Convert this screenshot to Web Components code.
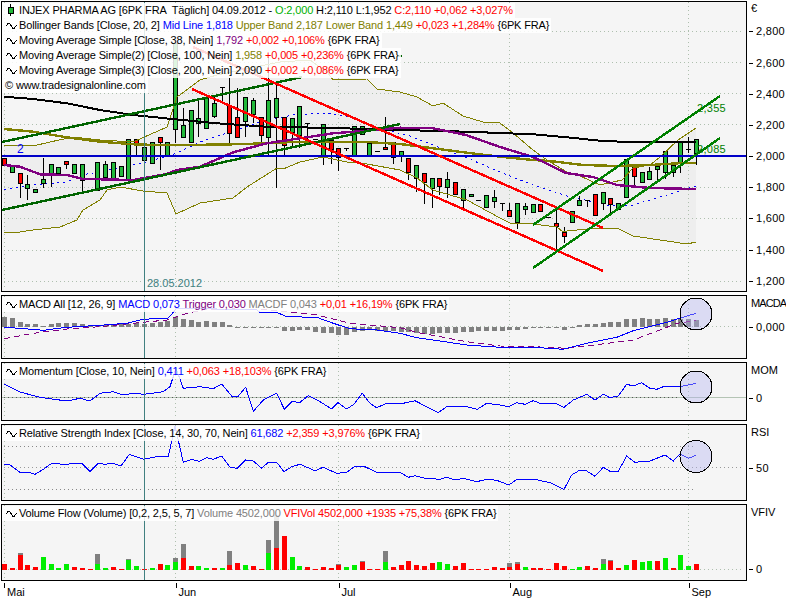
<!DOCTYPE html>
<html lang="de"><head><meta charset="utf-8"><title>INJEX PHARMA AG</title>
<style>
html,body{margin:0;background:#fff}
body{font:11px "Liberation Sans",Arial,sans-serif;color:#000}
.b{color:#0000ff}.o{color:#808000}.r{color:#ff0000}.g{color:#00b000}.p{color:#800080}.y{color:#808080}
</style></head><body>
<ts-chart>
<ts-pane kind="price" height="291" title-y="8" title="€" ticks="31:2,800 62.5:2,600 93.5:2,400 124.5:2,200 156:2,000 187:1,800 218:1,600 250:1,400 281:1,200">
<ts-legend>
<ts-row icon="candle">INJEX PHARMA AG [6PK FRA  Täglich] 04.09.2012 - <span class="g">O:2,000</span> H:2,110 L:1,952 <span class="r">C:2,110 +0,062 +3,027%</span></ts-row>
<ts-row icon="wave">Bollinger Bands [Close, 20, 2] <span class="b">Mid Line 1,818</span> <span class="o">Upper Band 2,187 Lower Band 1,449</span> <span class="r">+0,023 +1,284%</span> {6PK FRA}</ts-row>
<ts-row icon="wave">Moving Average Simple [Close, 38, Nein] <span class="p">1,792</span> <span class="r">+0,002 +0,106%</span> {6PK FRA}</ts-row>
<ts-row icon="wave">Moving Average Simple(2) [Close, 100, Nein] <span class="o">1,958</span> <span class="r">+0,005 +0,236%</span> {6PK FRA}</ts-row>
<ts-row icon="wave">Moving Average Simple(3) [Close, 200, Nein] 2,090 <span class="r">+0,002 +0,086%</span> {6PK FRA}</ts-row>
<ts-row icon="copy">© www.tradesignalonline.com</ts-row>
</ts-legend>
</ts-pane>
<ts-pane kind="macd" height="64" title-y="302.7" title="MACDA" title-tight ticks="326.7:0,000">
<ts-legend><ts-row icon="wave">MACD All [12, 26, 9] <span class="b">MACD 0,073</span> <span class="p">Trigger 0,030</span> <span class="y">MACDF 0,043</span> <span class="r">+0,01 +16,19%</span> {6PK FRA}</ts-row></ts-legend>
</ts-pane>
<ts-pane kind="mom" height="59" title-y="370" title="MOM" ticks="397.7:0">
<ts-legend><ts-row icon="wave">Momentum [Close, 10, Nein] <span class="b">0,411</span> <span class="r">+0,063 +18,103%</span> {6PK FRA}</ts-row></ts-legend>
</ts-pane>
<ts-pane kind="rsi" height="77" title-y="432" title="RSI" ticks="467.7:50">
<ts-legend><ts-row icon="wave">Relative Strength Index [Close, 14, 30, 70, Nein] <span class="b">61,682</span> <span class="r">+2,359 +3,976%</span> {6PK FRA}</ts-row></ts-legend>
</ts-pane>
<ts-pane kind="vol" height="77" title-y="512" title="VFIV" ticks="569.3:0">
<ts-legend><ts-row icon="wave">Volume Flow (Volume) [0,2, 2,5, 5, 7] <span class="y">Volume 4502,000</span> <span class="r">VFIVol 4502,000 +1935 +75,38%</span> {6PK FRA}</ts-row></ts-legend>
</ts-pane>
<ts-timeaxis>
<ts-month width="171.5">Mai</ts-month><ts-month width="163">Jun</ts-month><ts-month width="171">Jul</ts-month><ts-month width="179">Aug</ts-month><ts-month width="60">Sep</ts-month>
</ts-timeaxis>
</ts-chart>
<script>
const X=i=>Math.round(4+7.775*i);
const zl=(ox,oy,a)=>{const o=[];for(let k=0;k<a.length;k+=2)o.push([ox+a[k]/3,oy+a[k+1]/3]);return o};
const pts=p=>p.map(q=>q[0].toFixed(1)+','+q[1].toFixed(1)).join(' ');
const pl=(p,c,w,x='')=>`<polyline points="${pts(p)}" fill="none" stroke="${c}" stroke-width="${w}" ${x}/>`;
const ln=(a,b,c,d,col,w,x='')=>`<line x1="${a}" y1="${b}" x2="${c}" y2="${d}" stroke="${col}" stroke-width="${w}" ${x}/>`;
const MONTHS=[4.5,175.5,338.5,509.5,688.5];
const DOT='stroke-dasharray="1 3"';
const GC='#aebfae';
function vgrid(y0,y1){return MONTHS.map(x=>ln(x,y0,x,y1,GC,1,DOT)).join('')}
function hgrid(ys,col=GC,x1=744){return ys.map(y=>ln(4,y,x1,y,col,1,DOT)).join('')}
const teal=(y0,y1)=>ln(144.5,y0,144.5,y1,'#408080',1);
const circle=cy=>`<circle cx="696" cy="${cy}" r="16" fill="#b4b4f0" fill-opacity=".4" stroke="#000" stroke-width="1"/>`;

const C=[[0,158,165,0,'r'],[0,165,172,0,'g'],[0,173,183,198,'r'],[175,184,188,200,'g'],[0,189,192,0,'g'],[158,179,183,188,'g'],[0,164,173,187,'g'],[0,167,173,0,'g'],[0,161,164,169,'r'],[0,164,173,0,'g'],[0,164,180,191,'g'],[0,179,179,0,'g'],[0,162,190,0,'g'],[161,164,177,0,'g'],[0,162,179,0,'g'],[0,166,176,0,'g'],[0,139,180,0,'g'],[0,139,144,155,'r'],[0,147,160,0,'g'],[0,142,163,0,'g'],[0,137,142,170,'r'],[0,142,155,0,'g'],[0,43,129,143,'g'],[108,125,137,0,'g'],[0,110,142,0,'g'],[99,118,123,137,'g'],[0,98,128,0,'g'],[97,103,116,118,'g'],[0,87,87,104,'g'],[78,105,133,143,'r'],[88,117,137,0,'r'],[0,97,121,137,'g'],[98,100,114,123,'g'],[0,117,135,143,'r'],[57,100,137,155,'g'],[83,98,117,188,'g'],[0,117,145,155,'r'],[0,118,132,148,'g'],[0,106,135,148,'g'],[0,123,123,140,'g'],[0,139,139,0,'g'],[0,124,155,165,'g'],[0,140,149,164,'r'],[0,148,157,171,'r'],[0,148,148,151,'g'],[0,126,155,0,'g'],[0,126,134,0,'g'],[0,143,155,0,'g'],[0,151,151,0,'g'],[117,147,149,0,'r'],[0,142,157,164,'r'],[0,151,155,162,'g'],[0,158,172,180,'r'],[0,165,178,192,'g'],[0,173,182,204,'r'],[0,178,188,208,'g'],[0,178,186,195,'r'],[172,179,187,198,'g'],[0,182,194,0,'r'],[0,189,200,208,'g'],[0,194,196,0,'g'],[0,200,200,0,'g'],[0,195,207,0,'g'],[190,197,201,208,'g'],[0,203,203,211,'g'],[203,210,216,0,'r'],[0,203,222,229,'g'],[203,206,209,215,'g'],[0,204,212,0,'g'],[0,204,211,0,'r'],[0,217,217,0,'g'],[208,223,226,250,'r'],[227,232,236,243,'r'],[0,211,222,0,'g'],[196,200,205,0,'g'],[0,200,200,207,'g'],[0,194,215,0,'r'],[0,192,203,210,'g'],[0,198,204,213,'r'],[0,203,209,0,'g'],[0,159,197,0,'g'],[0,167,176,188,'r'],[0,172,182,0,'g'],[167,171,179,0,'g'],[0,166,169,182,'g'],[0,151,172,179,'g'],[0,165,172,177,'g'],[0,141,163,173,'g'],[137,149,149,153,'g'],[0,139,153,165,'g']];
function candles(){let s='';C.forEach((c,i)=>{const x=X(i);const[h,t,b,l,k]=c;
 if(h||l)s+=ln(x+.5,h||t,x+.5,l||b,'#000',1);
 if(t===b)s+=ln(x-2,t+.5,x+3,t+.5,'#000',1);
 else s+=`<rect x="${x-1.5}" y="${t+.5}" width="4" height="${b-t}" fill="${k==='r'?'#ff0000':'#22b83a'}" stroke="#000"/>`;
});return s}

const upper=[[4,145],[33,146],[50,142],[73,137],[100,140],[133,142],[167,127],[177,97],[200,80],[217,75],[227,73],[250,68],[280,62],[310,60],[328,73],[333,80],[367,79],[377,89],[400,92],[417,97],[433,106],[443,103],[463,116],[483,122],[500,123],[513,133],[533,150],[550,162],[567,172],[580,176],[600,185],[622,180],[633,168],[650,165],[660,157],[678,140],[696,128]];
const lower=[[4,232],[13,233],[33,230],[60,227],[77,220],[83,210],[100,200],[107,190],[120,187],[143,191],[167,193],[176,214],[200,203],[233,198],[247,187],[277,168],[283,169],[300,162],[323,157],[347,162],[367,164],[400,170],[417,178],[433,190],[467,200],[500,218],[510,223],[533,224],[557,227],[563,232],[567,231],[587,229],[617,228],[633,236],[667,241],[687,244],[696,242]];
const black=[...zl(0,0,[12,290,100,297,200,310,300,330,400,345,525,358,650,370,800,380,1000,384,1200,390]),...zl(400,0,[200,395,400,403,500,412,600,422,700,427,888,426])];
const olive=[...zl(0,0,[12,387,100,395,200,412,300,425,400,433,500,436]),...zl(200,75,[100,208,200,205,300,200,400,200,500,201,600,207]),...zl(400,130,[100,55,200,68,300,80,400,90]),[550,161],[583,165],[617,166],[650,165],[683,163],[696,163]];
const purple=[...zl(0,150,[12,45,60,50,120,73,200,75,250,87,300,88,400,90,500,72,530,60,600,50]),...zl(200,75,[100,232,200,205,300,190,400,175,500,167,600,158]),...zl(400,0,[100,385]),[466,135],[500,147],[533,157],[566,173],[593,177],[617,185],[650,188],[696,189]];
const mid=[[4,190],[33,185],[67,182],[80,175],[100,172],[133,165],[150,161],[177,153],[200,142],[230,132],[260,122],[293,115],[327,113],[353,118],[367,125],[410,136],[433,145],[467,158],[500,172],[533,185],[567,196],[607,205],[633,205],[667,195],[696,186]];

const DRAW={
price(){return `<polygon points="${pts(upper)} ${pts([...lower].reverse())}" fill="#eee"/>`+
  vgrid(2,290)+hgrid([31,62.5,93.5,124.5,187,218,250,281])+
  pl(mid,'#0000ff',1,'stroke-dasharray="2 4"')+candles()+
  pl(upper,'#808000',1)+pl(lower,'#808000',1)+
  pl(black,'#000',2)+pl(olive,'#808000',2.4)+pl(purple,'#800080',2.4)+
  ln(2,156,746,156,'#0000c8',2)+
  ln(2,210,400,124,'#006400',2.4)+ln(2,142,302,77,'#006400',2.4)+
  ln(397,55.5,402,55.5,'#006400',2)+
  ln(193,47,603,228,'#ff0000',2.4)+ln(192,89,603,271,'#ff0000',2.4)+
  ln(533,225,720,96,'#008000',2.4)+ln(533,268,720,138,'#008000',2.4)+
  teal(2,291)+
  `<text x="17" y="153" fill="#0000ff" font-size="12">2</text><text x="147" y="287" fill="#408080">28.05.2012</text><text x="697" y="112" fill="#008000" letter-spacing=".3">2,355</text><text x="697" y="153" fill="#008000" letter-spacing=".3">2,085</text>`},
macd(){const H=[82,85,95,101,103,107,102,100,99,99,102,105,105,104,103,102,102,99,101,98,95,92,80,87,90,95,94,95,95,104,113,110,112,112,112,112,122,123,120,120,125,130,130,134,134,125,122,120,124,124,124,125,127,130,131,131,130,128,128,127,125,124,122,122,122,121,119,117,113,112,114,114,119,111,105,103,103,98,97,97,88,87,85,86,86,85,86,88,88,90];
  const by=326.7;let b='';H.forEach((z,i)=>{const y=290+z/3,t=Math.min(y,by),h=Math.max(Math.abs(y-by),1);b+=`<rect x="${X(i)-2}" y="${t.toFixed(1)}" width="5" height="${h.toFixed(1)}" fill="#808080"/>`});
  const blue=[...zl(0,290,[12,112,60,115,130,121,200,112,300,106,380,100,430,88,505,84,530,55,700,58,770,60,780,67,830,67,860,80,950,82,1000,100,1050,116,1130,120,1200,130]),...zl(400,290,[50,143,100,150,200,165,300,172,400,172,490,178,560,160,650,142,700,122,800,97,888,70])];
  const pur=[...zl(0,290,[12,146,100,130,200,117,300,110,400,100,500,90,560,70,620,58,700,57,780,58,880,67,950,75,1050,100,1200,113]),...zl(400,290,[50,127,120,140,200,155,300,168,400,170,500,175,600,163,700,150,780,120,830,100,888,92])];
  return vgrid(296,357)+hgrid([326.5])+b+pl(pur,'#800080',1,'stroke-dasharray="6 4"')+pl(blue,'#0000ff',1)+teal(296,358)+circle(314)},
mom(){const l=[...zl(0,290,[12,282,60,306,120,322,200,333,240,325,270,333,300,310,340,305,370,315,400,310,432,313,490,305,510,290,528,235,550,295,600,290,640,296,665,282,695,318,715,318,737,292,760,364,790,330,830,310,853,358,875,335,900,337,925,317,960,335,995,357,1014,338,1040,357,1062,343,1087,310,1110,340,1130,353,1160,340,1200,342]),...zl(400,290,[45,332,70,345,115,368,140,350,200,350,232,358,260,340,300,345,327,350,350,338,375,343,400,332,420,340,470,342,492,352,520,330,560,313,585,330,610,313,630,323,655,318,680,283,700,288,725,278,750,295,770,298,795,288,840,290,888,280])];
  return vgrid(363,419)+ln(2,397.5,746,397.5,'#b4c4b4',1)+ln(4,397.5,680,397.5,'#555',1,DOT)+pl(l,'#0000ff',1)+teal(363,420)+circle(387)},
rsi(){const l=[...zl(0,430,[12,103,30,105,60,127,85,127,105,133,130,118,155,100,190,103,245,100,270,125,295,100,315,103,340,100,363,108,388,73,432,88,470,80,505,80,525,-12,550,97,575,88,597,94,620,83,640,88,665,78,690,112,712,115,737,90,760,93,785,115,805,97,830,97,852,125,875,110,900,103,945,122,970,112,1010,130,1040,127,1065,108,1090,108,1130,127,1170,128,1200,127]),...zl(400,430,[25,142,45,137,75,145,120,148,140,142,165,150,190,145,230,155,260,148,290,151,327,165,350,148,370,150,400,147,450,158,492,178,515,135,540,120,560,123,585,139,610,112,630,124,655,124,680,78,705,97,750,93,795,75,820,93,840,72,865,85,888,76])];
  return vgrid(425,499)+hgrid([446,489.5],'#888',693)+hgrid([467.5],'#999')+pl(l,'#0000ff',1)+teal(425,500)+circle(456.5)},
vol(){const R='r',G='g';const B=[[R,402],[R,413],[R,375,369],[R,405],[R,411],[G,381],[G,402],[G,414],[G,402],[R,411],[R,414],[R,417],[G,402,372],[G,414],[R,411],[R,417],[G,390,387],[G,408],[R,417],[G,414],[R,402],[G,405],[G,395,384],[R,384,342],[R,408],[G,408],[G,414],[R,414],[G,414],[R,405,363],[R,399],[G,405],[R,408],[R,417],[G,369,330],[R,354,256],[R,318],[G,381],[G,408],[R,411],[R,417],[R,411],[R,414],[R,405,402],[G,411],[G,405],[R,396,393],[R,417],[R,417],[G,396,363],[R,411],[R,405],[R,393],[R,405],[R,408],[R,399],[G,396],[G,402],[R,408],[R,399],[R,417],[R,417],[R,417],[R,411],[R,414],[R,411,399],[R,402,396],[G,411],[R,414],[R,414],[R,417],[R,399],[R,408],[G,417],[G,411],[R,408],[R,414],[G,402,387],[R,393,390],[R,414],[G,405],[R,390],[G,396],[G,393],[R,393],[G,384],[R,414],[G,375],[G,408],[R,402]];
  const Y=z=>430+z/3,bl=Y(420);let s='';B.forEach((b,i)=>{const x=X(i)-2;
    if(b[2])s+=`<rect x="${x}" y="${Y(b[2]).toFixed(1)}" width="5" height="${(Y(b[1])-Y(b[2])).toFixed(1)}" fill="#808080"/>`;
    s+=`<rect x="${x}" y="${Y(b[1]).toFixed(1)}" width="5" height="${(bl-Y(b[1])).toFixed(1)}" fill="${b[0]==='r'?'#ff0000':'#00ee00'}"/>`});
  return vgrid(505,579)+hgrid([569.5])+s+teal(505,580)}
};
const ICON={
 candle:'<svg width="12" height="15" viewBox="0 0 12 15"><line x1="5.5" y1="1" x2="5.5" y2="13" stroke="#000"/><rect x="3.5" y="4.5" width="5" height="6" fill="#22b83a" stroke="#000"/></svg>',
 wave:'<svg width="12" height="15" viewBox="0 0 12 15"><path d="M0.5 8.5L3.5 5L4.5 5L8 10.5L9 10.5L11.5 7" fill="none" stroke="#000" shape-rendering="crispEdges"/></svg>',
 copy:''
};
class TsChart extends HTMLElement{constructor(){super();this.attachShadow({mode:'open'}).innerHTML=`<style>:host{display:flex;flex-direction:column;gap:3px;padding:1px 0 0 1px;width:786px;overflow:hidden}</style><slot></slot>`}}
let paneTop=1;
class TsPane extends HTMLElement{
 connectedCallback(){if(this.shadowRoot)return;
  const h=+this.getAttribute('height'),top=paneTop;paneTop+=h+3;
  const rows=[];const tx=this.getAttribute('title');
  rows.push({y:+this.getAttribute('title-y'),t:tx,title:true});
  (this.getAttribute('ticks')||'').split(' ').forEach(p=>{const[a,b]=p.split(':');rows.push({y:+a,t:b})});
  rows.sort((a,b)=>a.y-b.y);
  const tops=rows.map(r=>Math.round(r.y-7));
  const tight=this.hasAttribute('title-tight')?' style="letter-spacing:-.9px"':'';
  const axis=rows.map((r,i)=>{const H=(tops[i+1]??top+h)-tops[i];
    return `<div class="tr" style="height:${H}px">${r.title?`<span class="ti"${tight}>${r.t}</span>`:`<i></i><span class="v">${r.t}</span>`}</div>`}).join('');
  const sh=this.attachShadow({mode:'open'});
  sh.innerHTML=`<style>
  :host{display:flex;height:${h}px}
  .plot{position:relative;width:746px;height:${h}px;box-sizing:border-box;border:1px solid #000;background:#f5f5f5;overflow:hidden;flex:none}
  svg{display:block;shape-rendering:crispEdges;font:11px "Liberation Sans",Arial,sans-serif}
  .lg{position:absolute;left:0;top:0;letter-spacing:-.14px}
  .axis{width:39px;overflow:hidden;padding-top:${tops[0]-top}px;font-size:11px;line-height:14px;white-space:nowrap;box-sizing:border-box;height:${h}px}
  .tr{display:flex;align-items:flex-start}
  .tr i{width:4px;height:1px;background:#000;margin:7px 3px 0 2px;flex:none}
  .ti{margin-left:4px}.v{letter-spacing:.3px}
  </style><div class="plot"><svg width="744" height="${h-2}" viewBox="2 ${top+1} 744 ${h-2}">${DRAW[this.getAttribute('kind')]()}</svg><div class="lg"><slot></slot></div></div><div class="axis">${axis}</div>`;
 }}
class TsLegend extends HTMLElement{constructor(){super();this.attachShadow({mode:'open'}).innerHTML=`<style>:host{display:flex;flex-direction:column;align-items:flex-start;padding-top:1px}</style><slot></slot>`}}
class TsRow extends HTMLElement{connectedCallback(){if(this.shadowRoot)return;
  const k=this.getAttribute('icon');
  this.attachShadow({mode:'open'}).innerHTML=`<style>:host{display:flex;height:15px;line-height:15px;background:rgba(255,255,255,.85);padding:0 2px 0 3px;white-space:pre;align-items:center}
  .ic{width:12px;height:15px;margin-right:2px;flex:none}svg{display:block}</style>${k==='copy'?'':`<span class="ic">${ICON[k]}</span>`}<span><slot></slot></span>`}}
class TsTimeaxis extends HTMLElement{constructor(){super();this.attachShadow({mode:'open'}).innerHTML=`<style>:host{display:flex;height:17px;padding-left:3px;margin-top:-1px}</style><slot></slot>`}}
class TsMonth extends HTMLElement{connectedCallback(){if(this.shadowRoot)return;
  this.attachShadow({mode:'open'}).innerHTML=`<style>:host{display:flex;flex:none;width:${this.getAttribute('width')}px;box-sizing:border-box}
  i{width:1px;height:5px;background:#000;margin:0 2px 0 0;flex:none}span{padding-top:2px;line-height:14px}</style><i></i><span><slot></slot></span>`}}
customElements.define('ts-chart',TsChart);
customElements.define('ts-pane',TsPane);
customElements.define('ts-legend',TsLegend);
customElements.define('ts-row',TsRow);
customElements.define('ts-timeaxis',TsTimeaxis);
customElements.define('ts-month',TsMonth);
</script>
</body></html>
